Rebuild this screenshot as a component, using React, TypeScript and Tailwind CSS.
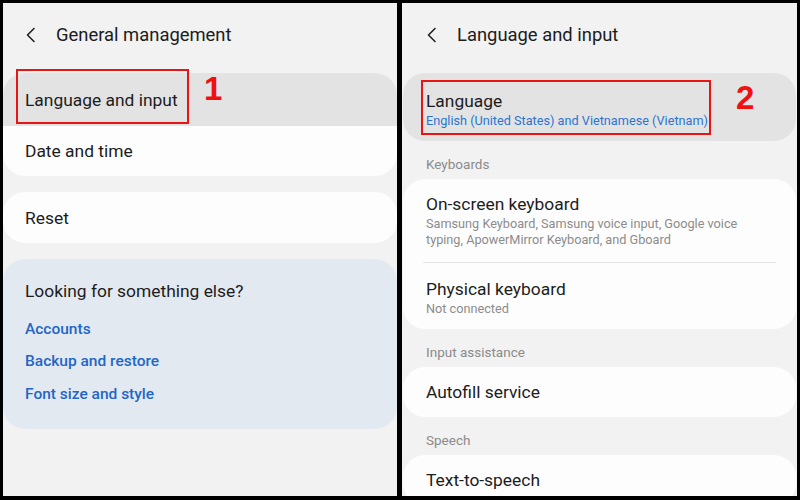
const FONT = "font-['Roboto','Liberation_Sans',sans-serif]";

function Chevron() {
  return (
    <svg width="12" height="16" viewBox="0 0 12 16" className="shrink-0">
      <polyline
        points="9,1.5 2.5,8 9,14.5"
        fill="none"
        stroke="#222"
        strokeWidth="1.6"
        strokeLinecap="round"
        strokeLinejoin="round"
      />
    </svg>
  );
}

function Header({ title, inset = "pl-[22px]" }: { title: string; inset?: string }) {
  return (
    <div className={"flex h-[70px] items-center pb-[6px] " + inset}>
      <Chevron />
      <span className="ml-[19px] text-[18.4px] leading-[24px] text-[#1c1c1c]">{title}</span>
    </div>
  );
}

function Marker({ n, className }: { n: string; className: string }) {
  return (
    <span
      className={
        "absolute font-['Liberation_Sans',Arial,sans-serif] text-[33px] font-bold leading-none text-[#f01010] " +
        className
      }
    >
      {n}
    </span>
  );
}

function SectionLabel({ children }: { children: string }) {
  return (
    <div className="pl-[24px] pt-[14px] pb-[6px] text-[13.5px] leading-[18px] text-[#8b8b8b]">
      {children}
    </div>
  );
}

function LeftPanel() {
  return (
    <div className="relative h-full w-[394px] overflow-hidden bg-[#f2f2f2]">
      <Header title="General management" />

      <div className="rounded-[22px] bg-[#fdfdfd]">
        <div className="relative flex h-[53px] items-center rounded-t-[22px] bg-[#e3e3e3] pl-[22px]">
          <span className="text-[17.4px] leading-[22px] text-[#1c1c1c]">Language and input</span>
          <div className="absolute left-[13px] top-[-4px] h-[55px] w-[173px] border-2 border-[#e81515]" />
          <Marker n="1" className="left-[201px] top-[-1px]" />
        </div>
        <div className="flex h-[50px] items-center pl-[22px]">
          <span className="text-[17.4px] leading-[22px] text-[#1c1c1c]">Date and time</span>
        </div>
      </div>

      <div className="mt-[16px] flex h-[51px] items-center rounded-[22px] bg-[#fdfdfd] pl-[22px]">
        <span className="text-[17.4px] leading-[22px] text-[#1c1c1c]">Reset</span>
      </div>

      <div className="mt-[16px] flex h-[170px] flex-col rounded-[22px] bg-[#e3e9f0] pl-[22px] pt-[21px]">
        <span className="text-[17.4px] leading-[22px] text-[#1c1c1c]">Looking for something else?</span>
        <span className="mt-[16px] text-[15.5px] font-medium leading-[22px] text-[#1f66c9]">Accounts</span>
        <span className="mt-[10px] text-[15.5px] font-medium leading-[22px] text-[#1f66c9]">Backup and restore</span>
        <span className="mt-[11px] text-[15.5px] font-medium leading-[22px] text-[#1f66c9]">Font size and style</span>
      </div>
    </div>
  );
}

function RightPanel() {
  return (
    <div className="relative h-full w-[395px] overflow-hidden bg-[#f2f2f2]">
      <Header title="Language and input" inset="pl-[24px]" />

      <div className="relative mx-[1px] h-[68px] rounded-[22px] bg-[#e3e3e3] pl-[23px] pt-[18px]">
        <div className="text-[17.4px] leading-[20px] text-[#1c1c1c]">Language</div>
        <div className="mt-[1px] text-[12.7px] leading-[17px] text-[#2b74d2]">
          English (United States) and Vietnamese (Vietnam)
        </div>
        <div className="absolute left-[18px] top-[7px] h-[55px] w-[290px] border-2 border-[#e81515]" />
        <Marker n="2" className="left-[333px] top-[8px]" />
      </div>

      <SectionLabel>Keyboards</SectionLabel>

      <div className="mx-[1px] rounded-[22px] bg-[#fdfdfd]">
        <div className="h-[83px] pl-[23px] pt-[15px]">
          <div className="text-[17.4px] leading-[20px] text-[#1c1c1c]">On-screen keyboard</div>
          <div className="mt-[2px] text-[12.7px] leading-[16px] text-[#8c8c8c]">
            Samsung Keyboard, Samsung voice input, Google voice
            <br />
            typing, ApowerMirror Keyboard, and Gboard
          </div>
        </div>
        <div className="mx-[20px] h-px bg-[#e6e6e6]" />
        <div className="h-[66px] pl-[23px] pt-[16px]">
          <div className="text-[17.4px] leading-[20px] text-[#1c1c1c]">Physical keyboard</div>
          <div className="mt-[2px] text-[12.7px] leading-[16px] text-[#8c8c8c]">Not connected</div>
        </div>
      </div>

      <SectionLabel>Input assistance</SectionLabel>

      <div className="mx-[1px] flex h-[50px] items-center rounded-[22px] bg-[#fdfdfd] pl-[23px]">
        <span className="text-[17.4px] leading-[22px] text-[#1c1c1c]">Autofill service</span>
      </div>

      <SectionLabel>Speech</SectionLabel>

      <div className="mx-[1px] flex h-[50px] items-center rounded-[22px] bg-[#fdfdfd] pl-[23px]">
        <span className="text-[17.4px] leading-[22px] text-[#1c1c1c]">Text-to-speech</span>
      </div>
    </div>
  );
}

export default function App() {
  return (
    <div className={"flex h-[500px] w-[800px] gap-[5px] bg-black pt-[3px] pr-[3px] pb-[4px] pl-[3px] " + FONT}>
      <LeftPanel />
      <RightPanel />
    </div>
  );
}
